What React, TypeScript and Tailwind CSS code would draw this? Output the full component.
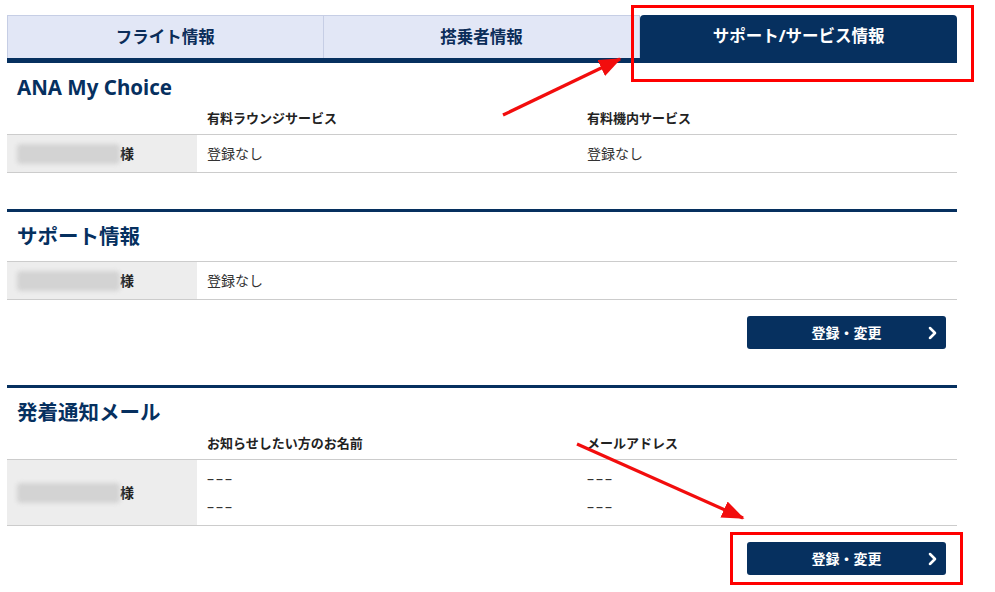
import React from 'react';

const NAVY = 'bg-[#06305f]';

function Tabs() {
  return (
    <div className="grid grid-cols-3 border-b-[5px] border-[#06305f]">
      <div className="h-[43px] flex items-center justify-center bg-[#e2e7f6] border-t border-l border-r border-[#c6cee5] text-[16.5px] font-bold text-[#0b2d59]">
        フライト情報
      </div>
      <div className="h-[43px] flex items-center justify-center bg-[#e2e7f6] border-t border-r border-[#c6cee5] text-[16.5px] font-bold text-[#0b2d59]">
        搭乗者情報
      </div>
      <div className={`h-[43px] flex items-center justify-center ${NAVY} rounded-t-[4px] text-[16.5px] font-bold text-white`}>
        サポート/サービス情報
      </div>
    </div>
  );
}

function Heading({ children }: { children: React.ReactNode }) {
  return (
    <div className="pt-[10px] h-[38px] pl-[10px]">
      <h2 className="text-[20.5px] leading-[28px] font-bold text-[#06305f]">{children}</h2>
    </div>
  );
}

function NameCell() {
  return (
    <div className="w-[190px] shrink-0 bg-[#ededed] flex items-center pl-[10px]">
      <div className="w-[103px] h-[20px] bg-[#d3d3d3] blur-[2px] rounded-sm" />
      <span className="text-[14px] font-bold text-[#222]">様</span>
    </div>
  );
}

function ColumnHeaders({ left, right }: { left: string; right?: string }) {
  return (
    <div className="h-[33px] flex items-center text-[13px] font-bold text-[#222]">
      <div className="w-[190px] shrink-0" />
      <div className="w-[380px] pl-[10px] pt-[3px]">{left}</div>
      {right && <div className="w-[380px] pl-[10px] pt-[3px]">{right}</div>}
    </div>
  );
}

function ChevronRight() {
  return (
    <svg width="9" height="13" viewBox="0 0 9 13" fill="none">
      <path d="M2 1.5 L7 6.5 L2 11.5" stroke="white" strokeWidth="2.6" strokeLinecap="round" strokeLinejoin="round" />
    </svg>
  );
}

function EditButton() {
  return (
    <div className="flex justify-end pr-[11px] pt-[16px]">
      <button className={`relative w-[199px] h-[33px] ${NAVY} rounded-[3px] flex items-center justify-center text-white text-[14px] font-bold`}>
        登録・変更
        <span className="absolute right-[9px] top-1/2 -translate-y-1/2 flex">
          <ChevronRight />
        </span>
      </button>
    </div>
  );
}

function Dashes() {
  return (
    <div className="w-[380px] pl-[10px] flex flex-col justify-center gap-[10px] leading-[18px] tracking-[2px]">
      <span>–––</span>
      <span>–––</span>
    </div>
  );
}

function Annotations() {
  return (
    <svg className="absolute left-0 top-0 pointer-events-none" width="995" height="592" viewBox="0 0 995 592">
      <defs>
        <marker id="head" markerWidth="7" markerHeight="5.5" refX="6.5" refY="2.75" orient="auto" markerUnits="strokeWidth">
          <path d="M0 0 L7 2.75 L0 5.5 Z" fill="#f20d0d" />
        </marker>
      </defs>
      <rect x="632.5" y="6.5" width="340" height="74" fill="none" stroke="#ff0000" strokeWidth="3" />
      <rect x="731.5" y="533.5" width="230" height="50" fill="none" stroke="#ff0000" strokeWidth="3" />
      <line x1="503" y1="115" x2="620" y2="59" stroke="#f20d0d" strokeWidth="3.2" markerEnd="url(#head)" />
      <line x1="577" y1="444" x2="743" y2="518" stroke="#f20d0d" strokeWidth="3.2" markerEnd="url(#head)" />
    </svg>
  );
}

export default function App() {
  return (
    <div
      className="relative w-[995px] h-[592px] bg-white overflow-hidden"
      style={{ fontFamily: '"Noto Sans", "Noto Sans CJK JP", sans-serif' }}
    >
      <div className="ml-[7px] w-[950px] pt-[15px]">
        <Tabs />

        {/* ANA My Choice */}
        <section className="pb-[36px]">
          <Heading>ANA My Choice</Heading>
          <ColumnHeaders left="有料ラウンジサービス" right="有料機内サービス" />
          <div className="flex h-[39px] border-y border-[#cccccc] text-[14px] text-[#333]">
            <NameCell />
            <div className="w-[380px] pl-[10px] flex items-center">登録なし</div>
            <div className="w-[380px] pl-[10px] flex items-center">登録なし</div>
          </div>
        </section>

        {/* サポート情報 */}
        <section className="border-t-[3px] border-[#06305f] pb-[36px]">
          <Heading>サポート情報</Heading>
          <div className="mt-[11px] flex h-[39px] border-y border-[#cccccc] text-[14px] text-[#333]">
            <NameCell />
            <div className="pl-[10px] flex items-center">登録なし</div>
          </div>
          <EditButton />
        </section>

        {/* 発着通知メール */}
        <section className="border-t-[3px] border-[#06305f]">
          <Heading>発着通知メール</Heading>
          <ColumnHeaders left="お知らせしたい方のお名前" right="メールアドレス" />
          <div className="flex h-[67px] border-y border-[#cccccc] text-[14px] text-[#333]">
            <NameCell />
            <Dashes />
            <Dashes />
          </div>
          <EditButton />
        </section>
      </div>
      <Annotations />
    </div>
  );
}
